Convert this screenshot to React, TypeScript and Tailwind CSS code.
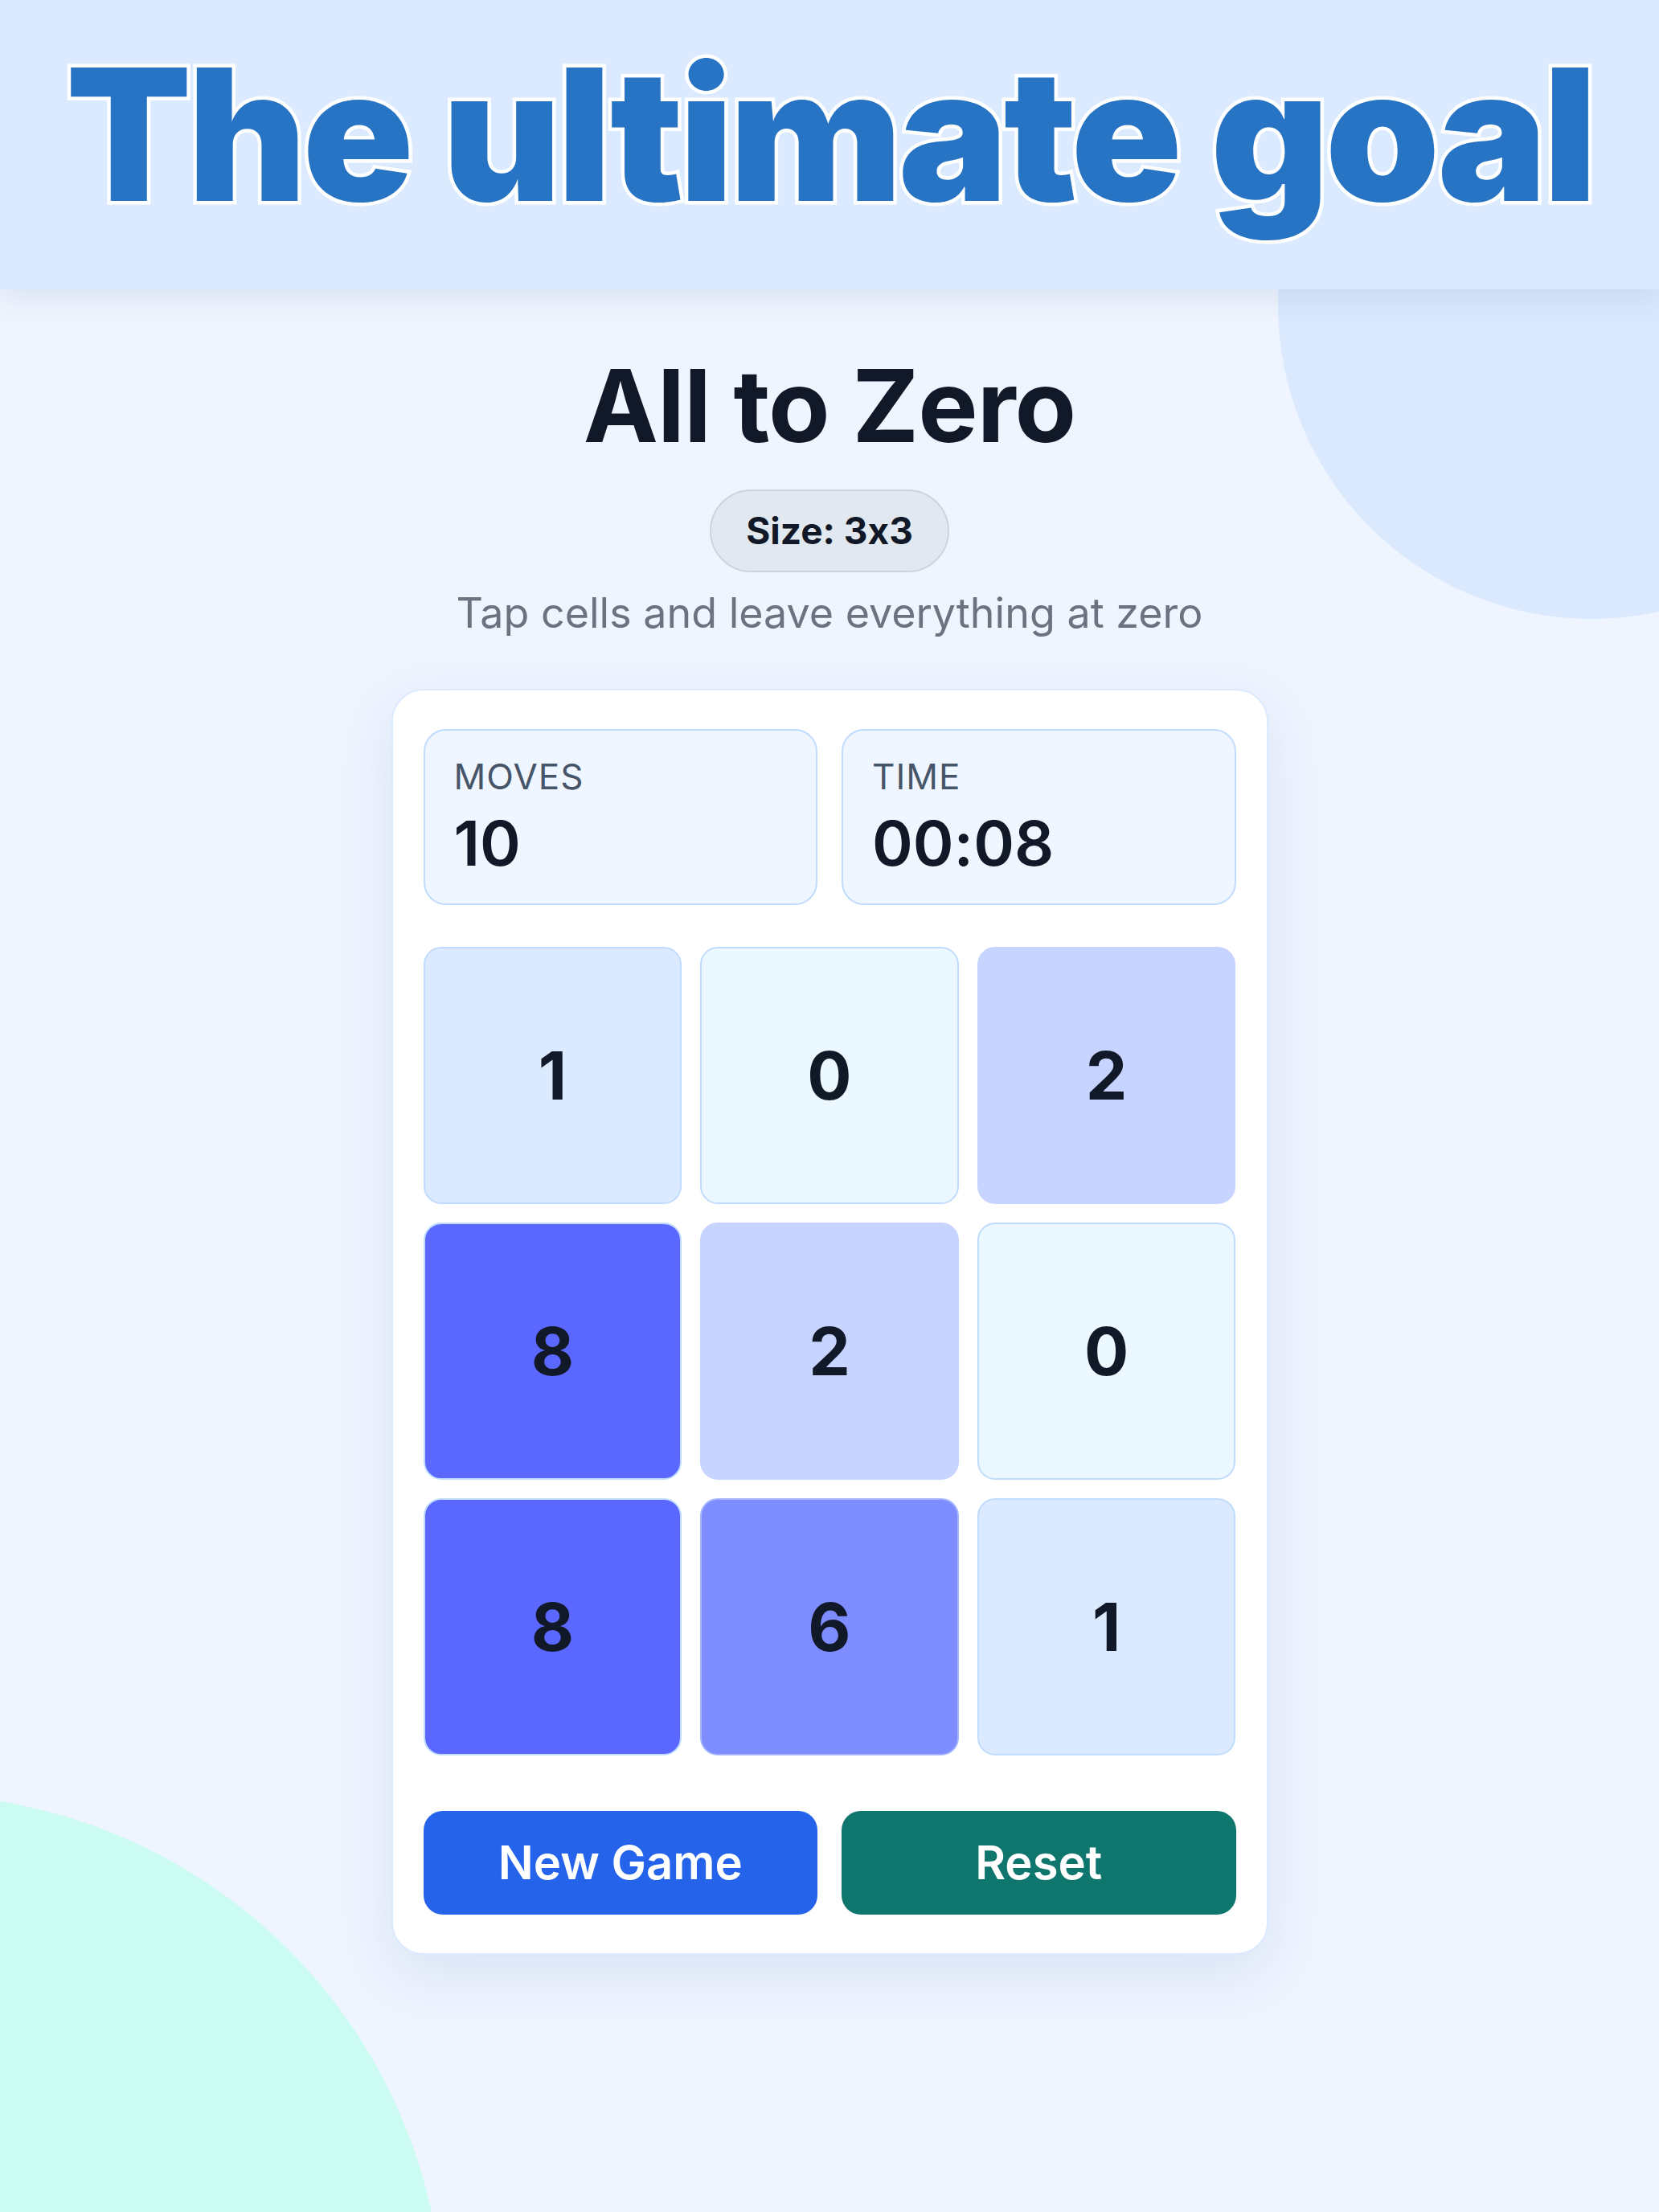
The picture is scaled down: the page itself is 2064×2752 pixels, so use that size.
import React from "react";

type Tile = { value: number };

const board: Tile[] = [
    { value: 1 }, { value: 0 }, { value: 2 },
    { value: 8 }, { value: 2 }, { value: 0 },
    { value: 8 }, { value: 6 }, { value: 1 },
];

// background shade for each cell value
function tileClass(value: number) {
    switch (value) {
        case 0:
            return "bg-[#ecf8ff] border-[#bfdbfe]";
        case 1:
            return "bg-[#dbeafe] border-[#bfdbfe]";
        case 2:
            return "bg-[#c7d4ff] border-[#c7d4ff]";
        case 6:
            return "bg-[#7d8cff] border-[#a5b4fc]";
        default:
            return "bg-[#5a68ff] border-[#bfdbfe]";
    }
}

function Stat(props: { label: string; value: string }) {
    return (
        <div className="flex flex-col rounded-[28px] border-2 border-[#bfdbfe] bg-[#eff6ff] px-[36px] pt-[35px] pb-[36px]">
            <div className="text-[44px] leading-none tracking-[1px] text-[#475569]">{props.label}</div>
            <div className="mt-[23px] text-[77px] leading-none font-semibold text-[#111827]">{props.value}</div>
        </div>
    );
}

export default function App() {
    return (
        <div className="relative h-[2752px] w-full overflow-hidden bg-[#eff5ff] font-['Inter','Liberation_Sans',sans-serif] [font-feature-settings:'calt'_0]">
            {/* decorative blobs */}
            <div className="absolute left-[1590px] top-[-10px] h-[780px] w-[780px] rounded-full bg-[#dbe9fe]"></div>
            <div className="absolute left-[-768px] top-[2232px] h-[1320px] w-[1320px] rounded-full bg-[#ccfbf1]"></div>

            <header className="relative z-10 flex h-[360px] items-center justify-center bg-[#dbeafe] shadow-[0_10px_36px_rgba(30,58,110,0.10)]">
                <h1 className="mt-[-26px] text-[228px] leading-none font-black tracking-[-5px] text-[#2874c4] [paint-order:stroke_fill] [-webkit-text-stroke:9px_white]">
                    The ultimate goal
                </h1>
            </header>

            <main className="relative z-10 flex flex-col items-center">
                <h2 className="mt-[82px] text-[125px] leading-none font-bold tracking-[-1px] text-[#111827]">All to Zero</h2>

                <div className="mt-[42px] flex h-[103px] items-center rounded-full border-2 border-[#cbd5e1] bg-[#e2e8f0] px-[43px] text-[46px] font-bold text-[#111827]">
                    Size: 3x3
                </div>

                <p className="mt-[25px] text-[52px] leading-none text-[#6b7280]">Tap cells and leave everything at zero</p>

                <div className="mt-[68px] flex w-[1091px] flex-col rounded-[40px] border-2 border-[#dbeafe] bg-white px-[38px] py-[48px] shadow-[0_24px_70px_rgba(30,58,138,0.10)]">
                    <div className="grid grid-cols-2 gap-[30px]">
                        <Stat label="MOVES" value="10" />
                        <Stat label="TIME" value="00:08" />
                    </div>

                    <div className="mt-[52px] grid grid-cols-3 gap-[23px]">
                        {board.map((tile, i) => (
                            <button
                                key={i}
                                className={"flex h-[320px] items-center justify-center rounded-[22px] border-2 text-[82px] font-bold text-[#111827] " + tileClass(tile.value)}
                            >
                                {tile.value}
                            </button>
                        ))}
                    </div>

                    <div className="mt-[69px] grid grid-cols-2 gap-[30px]">
                        <button className="h-[129px] rounded-[24px] bg-[#2563eb] text-[58px] font-semibold text-white">New Game</button>
                        <button className="h-[129px] rounded-[24px] bg-[#0f766e] text-[58px] font-semibold text-white">Reset</button>
                    </div>
                </div>
            </main>
        </div>
    );
}
